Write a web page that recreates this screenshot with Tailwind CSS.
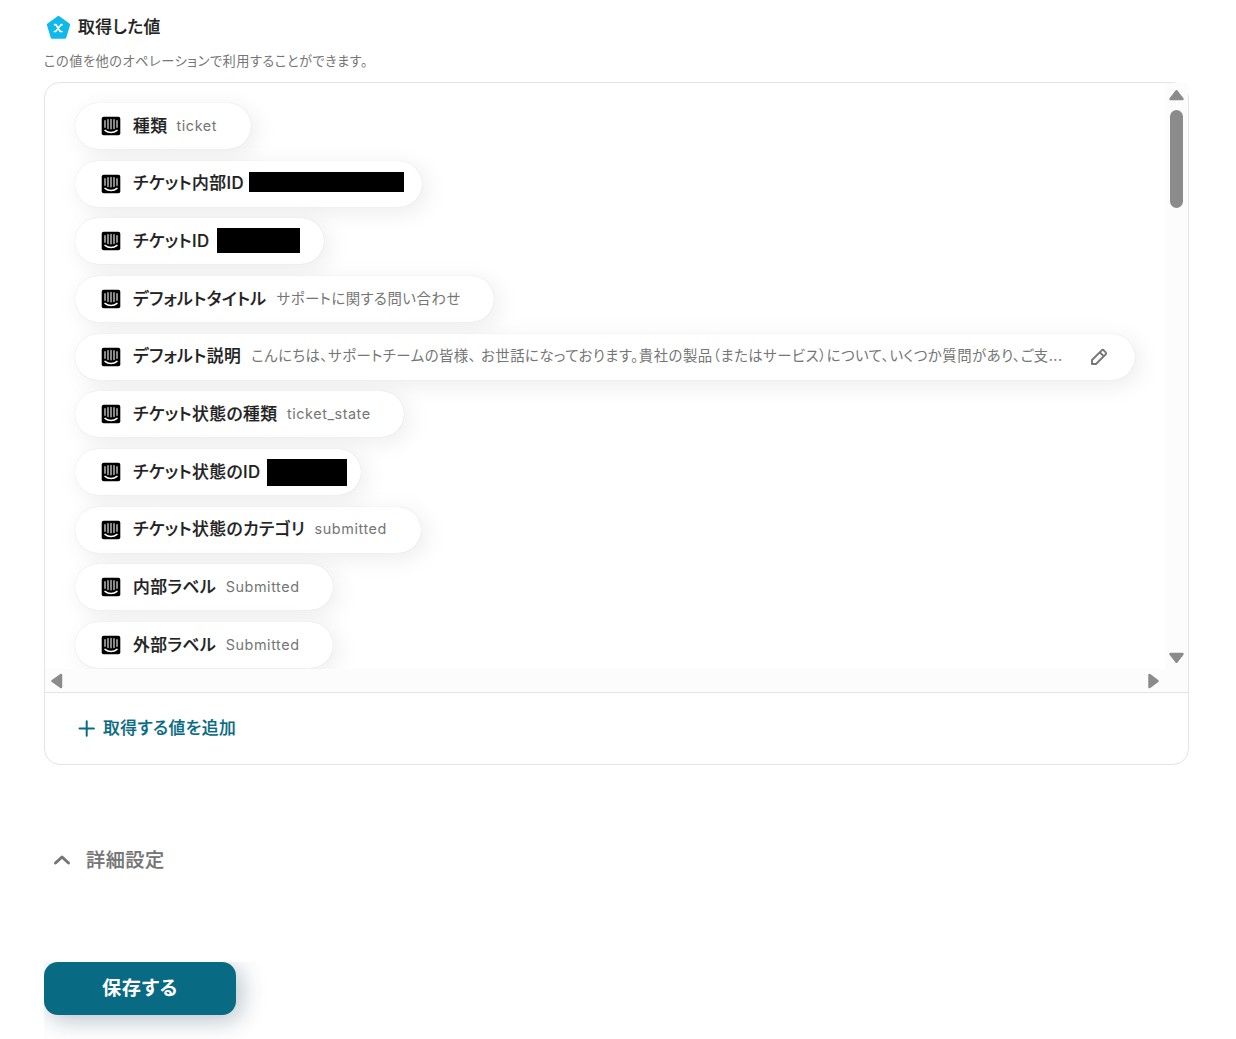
<!DOCTYPE html>
<html lang="ja">
  <head>
    <meta charset="UTF-8" />
    <title>取得した値</title>
    <meta name="viewport" content="width=device-width, initial-scale=1.0" />
    <script src="https://cdn.jsdelivr.net/npm/@tailwindcss/browser@4"></script>
  </head>
  <body class="h-[1039px] overflow-hidden bg-white pl-11 font-[Inter,'Noto_Sans_CJK_JP',sans-serif] text-[#212121] [font-feature-settings:'palt']">
    <!-- Shared icons -->
    <svg class="hidden">
      <symbol id="intercom" viewBox="0 0 20 20">
        <rect x="0.7" y="0.7" width="18.6" height="18.6" rx="2" fill="#000" />
        <path d="M4 4.8v6.4M7 3.8v8.7M10 3.5v9.3M13 3.8v8.7M16 4.8v6.4" fill="none" stroke="#c4c4c4" stroke-width="1.4" stroke-linecap="round" />
        <path d="M4 14.4c3.3 2.7 8.700 2.700 12 0" fill="none" stroke="#fff" stroke-width="1.5" stroke-linecap="round" />
      </symbol>
    </svg>

    <!-- Heading -->
    <header class="flex h-[54px] items-center gap-[7px] pt-[1px] pl-[2px]">
      <svg class="h-[25px] w-[25px]" viewBox="0 0 25 25">
        <path d="M12.5 2.4 22.6 9.7 18.8 22.2H6.2L2.4 9.7Z" fill="#0fb9ea" stroke="#0fb9ea" stroke-width="3" stroke-linejoin="round" />
        <path d="M8.6 9.700H10L14.200 16.500H15.900M16 9.700H15L9.600 16.500H8.400" fill="none" stroke="#fff" stroke-width="1.7" stroke-linecap="round" stroke-linejoin="round" />
      </svg>
      <h1 class="pt-px text-[16.8px] font-medium tracking-[0.45px] [-webkit-text-stroke:0.2px]">取得した値</h1>
    </header>
    <p class="h-7 text-[13.2px] leading-[15px] tracking-[0.53px] text-[#757575]">この値を他のオペレーションで利用することができます。</p>

    <!-- Value list -->
    <section class="h-[683px] w-[1145px] rounded-[16px] border border-[#e4e4e4]">
      <div class="grid h-[610px] grid-cols-[1120px_23px] grid-rows-[586px_23px] border-b border-[#e4e4e4]">
        <ul class="flex flex-col gap-[11.66px] overflow-hidden pt-5 pl-[30px]">
          <li class="flex h-[46px] w-[176px] shrink-0 items-center rounded-full bg-white pl-[26px] shadow-[5px_5px_24px_rgba(0,0,0,0.08),0_0_1px_rgba(0,0,0,0.15)]">
            <svg class="mr-3 h-5 w-5"><use href="#intercom" /></svg>
            <span class="pt-[0.6px] text-[16.8px] font-medium tracking-[0.45px] [-webkit-text-stroke:0.2px]">種類</span>
            <span class="mb-px ml-[9px] text-[14.4px] tracking-[0.6px] text-[#757575]">ticket</span>
          </li>
          <li class="flex h-[46px] w-[347px] shrink-0 items-center rounded-full bg-white pl-[26px] shadow-[5px_5px_24px_rgba(0,0,0,0.08),0_0_1px_rgba(0,0,0,0.15)]">
            <svg class="mr-3 h-5 w-5"><use href="#intercom" /></svg>
            <span class="w-[116px] pt-[0.6px] text-[16.8px] font-medium tracking-[0.45px] whitespace-nowrap [-webkit-text-stroke:0.2px]">チケット内部ID</span>
            <span class="mb-1 h-5 w-[155px] bg-black"></span>
          </li>
          <li class="flex h-[46px] w-[249px] shrink-0 items-center rounded-full bg-white pl-[26px] shadow-[5px_5px_24px_rgba(0,0,0,0.08),0_0_1px_rgba(0,0,0,0.15)]">
            <svg class="mr-3 h-5 w-5"><use href="#intercom" /></svg>
            <span class="w-[84px] pt-[0.6px] text-[16.8px] font-medium tracking-[0.45px] whitespace-nowrap [-webkit-text-stroke:0.2px]">チケットID</span>
            <span class="mb-[2px] h-[25px] w-[83px] bg-black"></span>
          </li>
          <li class="flex h-[46px] w-[419px] shrink-0 items-center rounded-full bg-white pl-[26px] shadow-[5px_5px_24px_rgba(0,0,0,0.08),0_0_1px_rgba(0,0,0,0.15)]">
            <svg class="mr-3 h-5 w-5"><use href="#intercom" /></svg>
            <span class="pt-[0.6px] text-[16.8px] font-medium tracking-[0.45px] [-webkit-text-stroke:0.2px]">デフォルトタイトル</span>
            <span class="mb-px ml-[10px] text-[14.4px] tracking-[0.5px] text-[#757575]">サポートに関する問い合わせ</span>
          </li>
          <li class="flex h-[46px] w-[1060px] shrink-0 items-center rounded-full bg-white pl-[26px] shadow-[5px_5px_24px_rgba(0,0,0,0.08),0_0_1px_rgba(0,0,0,0.15)]">
            <svg class="mr-3 h-5 w-5"><use href="#intercom" /></svg>
            <span class="pt-[0.6px] text-[16.8px] font-medium tracking-[0.45px] [-webkit-text-stroke:0.2px]">デフォルト説明</span>
            <span class="mb-[2px] ml-[10px] text-[14.4px] tracking-[0.49px] whitespace-nowrap text-[#757575]">こんにちは、サポートチームの皆様、 お世話になっております。貴社の製品（またはサービス）について、いくつか質問があり、ご支...</span>
            <svg class="mr-[26px] ml-auto h-5 w-5" viewBox="0 0 20 20" fill="none" stroke="#757575" stroke-width="1.9" stroke-linejoin="round">
              <path d="M3 17v-4L12.7 3.3q1-.9 2 0l2 2q.9 1 0 2L7 17ZM11 5.5l3.7 3.7" />
            </svg>
          </li>
          <li class="flex h-[46px] w-[329px] shrink-0 items-center rounded-full bg-white pl-[26px] shadow-[5px_5px_24px_rgba(0,0,0,0.08),0_0_1px_rgba(0,0,0,0.15)]">
            <svg class="mr-3 h-5 w-5"><use href="#intercom" /></svg>
            <span class="pt-[0.6px] text-[16.8px] font-medium tracking-[0.45px] [-webkit-text-stroke:0.2px]">チケット状態の種類</span>
            <span class="mb-px ml-[9.5px] text-[14.4px] tracking-[0.55px] text-[#757575]">ticket_state</span>
          </li>
          <li class="flex h-[46px] w-[286px] shrink-0 items-center rounded-full bg-white pl-[26px] shadow-[5px_5px_24px_rgba(0,0,0,0.08),0_0_1px_rgba(0,0,0,0.15)]">
            <svg class="mr-3 h-5 w-5"><use href="#intercom" /></svg>
            <span class="w-[134px] pt-[0.6px] text-[16.8px] font-medium tracking-[0.45px] whitespace-nowrap [-webkit-text-stroke:0.2px]">チケット状態のID</span>
            <span class="mt-px h-[27px] w-[80px] bg-black"></span>
          </li>
          <li class="flex h-[46px] w-[346px] shrink-0 items-center rounded-full bg-white pl-[26px] shadow-[5px_5px_24px_rgba(0,0,0,0.08),0_0_1px_rgba(0,0,0,0.15)]">
            <svg class="mr-3 h-5 w-5"><use href="#intercom" /></svg>
            <span class="pt-[0.6px] text-[16.8px] font-medium tracking-[0.45px] [-webkit-text-stroke:0.2px]">チケット状態のカテゴリ</span>
            <span class="mb-[2px] ml-[9.5px] text-[14.4px] tracking-[0.58px] text-[#757575]">submitted</span>
          </li>
          <li class="flex h-[46px] w-[258px] shrink-0 items-center rounded-full bg-white pl-[26px] shadow-[5px_5px_24px_rgba(0,0,0,0.08),0_0_1px_rgba(0,0,0,0.15)]">
            <svg class="mr-3 h-5 w-5"><use href="#intercom" /></svg>
            <span class="pt-[0.6px] text-[16.8px] font-medium tracking-[0.45px] [-webkit-text-stroke:0.2px]">内部ラベル</span>
            <span class="mb-px ml-[9.5px] text-[14.4px] tracking-[0.58px] text-[#757575]">Submitted</span>
          </li>
          <li class="flex h-[46px] w-[258px] shrink-0 items-center rounded-full bg-white pl-[26px] shadow-[5px_5px_24px_rgba(0,0,0,0.08),0_0_1px_rgba(0,0,0,0.15)]">
            <svg class="mr-3 h-5 w-5"><use href="#intercom" /></svg>
            <span class="pt-[0.6px] text-[16.8px] font-medium tracking-[0.45px] [-webkit-text-stroke:0.2px]">外部ラベル</span>
            <span class="ml-[9.5px] text-[14.4px] tracking-[0.58px] text-[#757575]">Submitted</span>
          </li>
        </ul>

        <!-- Vertical scrollbar -->
        <div class="flex flex-col items-center bg-[#fcfcfc] pt-[6px] pb-[5px]">
          <svg class="h-3 w-[17px]" viewBox="0 0 17 12"><path d="M8.5 2.300 14.500 10H2.500Z" fill="#8b8b8b" stroke="#8b8b8b" stroke-width="2.5" stroke-linejoin="round" /></svg>
          <div class="mt-[9px] h-[98px] w-[13px] rounded-full bg-[#8b8b8b]"></div>
          <svg class="mt-auto h-3 w-[17px]" viewBox="0 0 17 12"><path d="M8.5 9.700 14.500 2H2.500Z" fill="#8b8b8b" stroke="#8b8b8b" stroke-width="2.5" stroke-linejoin="round" /></svg>
        </div>

        <!-- Horizontal scrollbar -->
        <div class="col-span-2 flex items-center justify-between bg-[#fcfcfc] pr-[28px] pl-[6px]">
          <svg class="h-4 w-3" viewBox="0 0 12 16"><path d="M1.500 8 10 2V14Z" fill="#8b8b8b" stroke="#8b8b8b" stroke-width="2.5" stroke-linejoin="round" /></svg>
          <svg class="h-4 w-3" viewBox="0 0 12 16"><path d="M9.500 8 1.500 2V14Z" fill="#8b8b8b" stroke="#8b8b8b" stroke-width="2.5" stroke-linejoin="round" /></svg>
        </div>
      </div>

      <button class="flex h-[71px] items-center gap-2 pl-[34px] text-[16.8px] font-medium tracking-[0.45px] text-[#096a83] [-webkit-text-stroke:0.2px]">
        <svg class="-ml-px h-[17px] w-[17px]" viewBox="0 0 17 17"><path d="M8.700 1.300v14.400M1.500 8.500h14.400" stroke="#096a83" stroke-width="2" stroke-linecap="round" /></svg>
        取得する値を追加
      </button>
    </section>

    <!-- Advanced settings toggle -->
    <button class="mt-[80px] flex h-[30px] items-center gap-[15px] pl-[9px] text-[19.2px] font-medium tracking-[0.5px] text-[#757575] [-webkit-text-stroke:0.2px]">
      <svg class="h-[18px] w-[18px]" viewBox="0 0 18 18"><path d="M2.500 12 9 6l6.500 6" fill="none" stroke="#757575" stroke-width="3" stroke-linecap="round" stroke-linejoin="round" /></svg>
      詳細設定
    </button>

    <!-- Save -->
    <div class="mt-[87px] h-[77px] w-[230px] overflow-hidden">
      <button class="h-[53px] w-[192px] rounded-[14px] bg-[#096a83] text-[19.2px] font-bold tracking-[0.7px] text-white shadow-[5px_5px_24px_rgba(10,50,70,0.3)]">保存する</button>
    </div>
  </body>
</html>
